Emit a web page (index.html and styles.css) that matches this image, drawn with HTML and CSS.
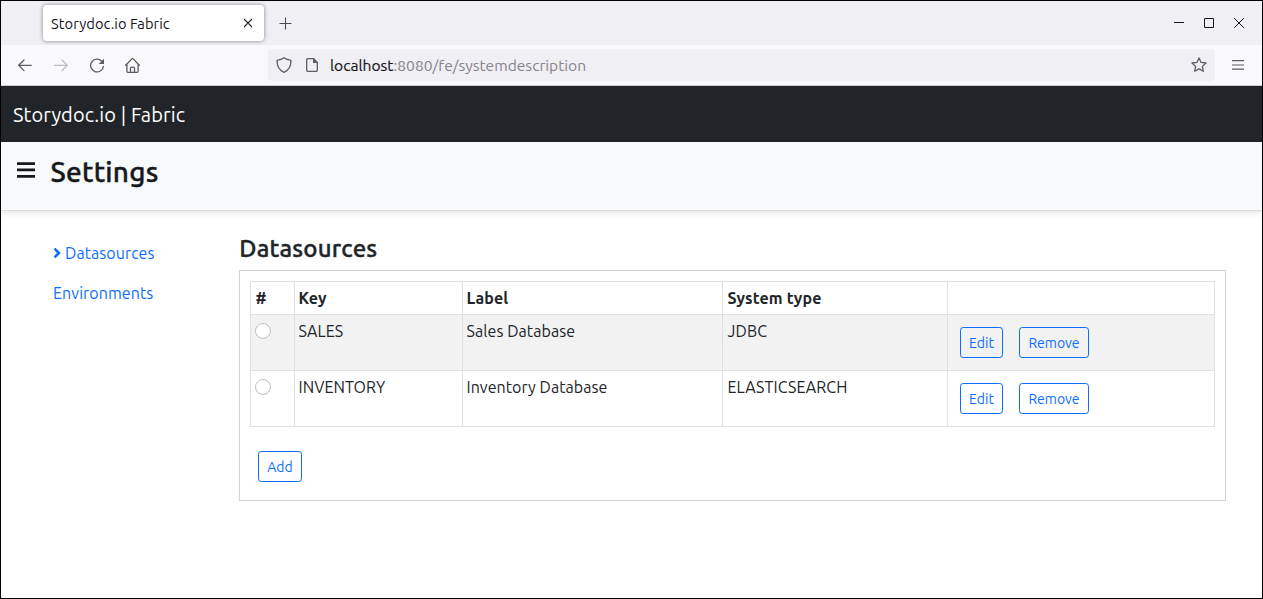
FILE: index.html
```html
<!DOCTYPE html>
<html lang="en">
<head>
<meta charset="utf-8">
<title>Storydoc.io Fabric</title>
<link rel="stylesheet" href="styles.css">
</head>
<body>
<div class="window">
  <div class="tabstrip">
    <div class="tab">
      <span class="tab-title">Storydoc.io Fabric</span>
      <svg class="tab-close" width="10" height="10" viewBox="0 0 10 10"><path d="M1 1l8 8M9 1l-8 8" fill="none" stroke="#2b2a33" stroke-width="1.1"/></svg>
    </div>
    <svg class="new-tab" width="13" height="13" viewBox="0 0 13 13"><path d="M6.5 .5v12M.5 6.5h12" fill="none" stroke="#4c4b55" stroke-width="1.1"/></svg>
    <div class="window-controls">
      <svg width="10" height="10" viewBox="0 0 10 10"><path d="M0 4.5h10" stroke="#15141a"/></svg>
      <svg width="10" height="10" viewBox="0 0 10 10"><path d="M.5 .5h9v9h-9z" fill="none" stroke="#15141a"/></svg>
      <svg width="10" height="10" viewBox="0 0 10 10"><path d="M.2 .2l9.6 9.6M9.8 .2l-9.6 9.6" fill="none" stroke="#15141a"/></svg>
    </div>
  </div>
  <div class="toolbar">
    <div class="nav-icons">
      <svg width="16" height="16" viewBox="0 0 16 16" fill="none" stroke="#5b5b66" stroke-width="1.3" stroke-linecap="round" stroke-linejoin="round"><path d="M7 3L1.700 8.300 7 13.600M2 8.300h12.300"/></svg>
      <svg width="16" height="16" viewBox="0 0 16 16" fill="none" stroke="#bcbcc2" stroke-width="1.3" stroke-linecap="round" stroke-linejoin="round"><path d="M9 3L14.300 8.300 9 13.600M14 8.300H1.700"/></svg>
      <svg width="16" height="16" viewBox="0 0 16 16"><path d="M12.600 4A6.400 6.400 0 1 0 14.400 9.300" fill="none" stroke="#5b5b66" stroke-width="1.3" stroke-linecap="round"/><path d="M15 1.700V6.500a.6.6 0 0 1-.6.6H9.700z" fill="#5b5b66"/></svg>
      <svg width="16" height="16" viewBox="0 0 16 16" fill="none" stroke="#5b5b66" stroke-width="1.3" stroke-linecap="round" stroke-linejoin="round"><path d="M.7 8.300L6.800 1.900a1 1 0 0 1 1.400 0L14.300 8.300M1.900 7.300v7a1 1 0 0 0 1 1h9.200a1 1 0 0 0 1-1V7.300M5.500 15.200v-4a1 1 0 0 1 1-1h2a1 1 0 0 1 1 1v4"/></svg>
    </div>
    <div class="urlbar">
      <svg class="shield" width="16" height="16" viewBox="0 0 16 16"><path d="M8 .8C6 2.200 3.800 2.900 1.700 3.100 1.300 3.200 1 3.500 1 4c.1 5.600 2.400 9.300 7 11.300 4.600-2 6.900-5.700 7-11.300 0-.5-.3-.8-.7-.9C12.200 2.900 10 2.200 8 .8z" fill="none" stroke="#5b5b66" stroke-width="1.3" stroke-linejoin="round"/></svg>
      <svg class="page" width="12" height="14" viewBox="0 0 12 14"><path d="M7.600 .7H1.900A1.200 1.200 0 0 0 .7 1.900v10.200a1.200 1.200 0 0 0 1.200 1.200h8.200a1.200 1.200 0 0 0 1.200-1.200V4.500z" fill="none" stroke="#5b5b66" stroke-width="1.3"/><path d="M7 .5h.8L11.700 4.400V5H7.600A.6.6 0 0 1 7 4.400z" fill="#5b5b66"/></svg>
      <span class="url"><span class="url-host">localhost</span><span class="url-path">:8080/fe/systemdescription</span></span>
      <svg class="star" width="16" height="16" viewBox="0 0 16 16"><path d="M8 .9l2.100 4.500 4.900.6-3.600 3.400.95 4.900L8 11.900l-4.350 2.400.95-4.900L1 6l4.900-.6z" fill="none" stroke="#5b5b66" stroke-width="1.3" stroke-linejoin="round"/></svg>
    </div>
    <svg class="menu" width="12" height="10" viewBox="0 0 12 10"><path d="M0 .6h12M0 5h12M0 9.200h12" stroke="#5b5b66" stroke-width="1.2"/></svg>
  </div>
  <div class="brandbar"><span class="brand">Storydoc.io | Fabric</span></div>
  <header class="pagehead">
    <svg width="18" height="16" viewBox="0 0 18 16"><path d="M0 1.600h18M0 7.900h18M0 14.300h18" stroke="#16181b" stroke-width="2.800"/></svg>
    <h1 class="title">Settings</h1>
  </header>
  <div class="content">
    <nav class="sidenav">
      <a class="navlink active"><svg width="8" height="12" viewBox="0 0 8 12"><path d="M1.500 1.600L5.900 6l-4.400 4.400" fill="none" stroke="#0d6efd" stroke-width="2.600"/></svg>Datasources</a>
      <a class="navlink">Environments</a>
    </nav>
    <main class="main">
      <h2 class="subtitle">Datasources</h2>
      <div class="panel">
        <table class="grid">
          <colgroup><col class="c1"><col class="c2"><col class="c3"><col class="c4"><col class="c5"></colgroup>
          <tr class="head"><th>#</th><th>Key</th><th>Label</th><th class="type">System type</th><th></th></tr>
          <tr class="row striped">
            <td><span class="radio"></span></td><td>SALES</td><td>Sales Database</td><td class="type">JDBC</td>
            <td><div class="actions"><span class="btn">Edit</span><span class="btn btn-remove">Remove</span></div></td>
          </tr>
          <tr class="row">
            <td><span class="radio"></span></td><td>INVENTORY</td><td>Inventory Database</td><td class="type">ELASTICSEARCH</td>
            <td><div class="actions"><span class="btn">Edit</span><span class="btn btn-remove">Remove</span></div></td>
          </tr>
        </table>
        <span class="btn btn-add">Add</span>
      </div>
    </main>
  </div>
</div>
</body>
</html>
```
FILE: styles.css
```css
* { box-sizing: border-box; }
body {
  margin: 0;
  font: 16px/24px Ubuntu, "Noto Sans", sans-serif;
  color: #212529;
  overflow: hidden;
}
svg { display: block; flex: none; }
.window {
  height: 599px;
  border: 1px solid #000;
  background: #fff;
  display: flex;
  flex-direction: column;
}
.tabstrip {
  height: 44px;
  flex: none;
  background: #f0eff4;
  display: flex;
  align-items: center;
  padding: 0 18px 0 42px;
}
.tab {
  width: 221px;
  height: 36px;
  background: #fff;
  border-radius: 4px;
  box-shadow: 0 0 4px rgba(0, 0, 0, .45);
  display: flex;
  align-items: center;
  justify-content: space-between;
  padding: 0 11px 0 8px;
}
.tab-title { font-size: 14.67px; letter-spacing: .08px; color: #15141a; padding-top: 1px; }
.new-tab { margin-left: 15px; margin-top: 1px; }
.window-controls { margin-left: auto; display: flex; gap: 20px; }
.toolbar {
  height: 41px;
  flex: none;
  background: #f9f9fb;
  border-bottom: 1px solid #cccccf;
  display: flex;
  align-items: center;
  padding: 0 18px 0 16px;
}
.nav-icons { display: flex; gap: 20px; }
.urlbar {
  width: 947px;
  height: 32px;
  margin-left: 127px;
  border-radius: 4px;
  background: #f0eff4;
  display: flex;
  align-items: center;
  padding: 0 8px;
}
.page { margin-left: 14px; }
.url { margin-left: 12px; font-size: 15.6px; white-space: nowrap; padding-bottom: 1px; }
.url-host { color: #15141a; -webkit-text-stroke: .15px #15141a; }
.url-path { color: #84848b; }
.star { margin-left: auto; }
.menu { margin-left: auto; }
.brandbar {
  height: 56px;
  flex: none;
  background: #212529;
  display: flex;
  align-items: center;
  padding: 1px 12px 0;
}
.brand { color: #fff; font-size: 20px; line-height: 30px; letter-spacing: .1px; }
.pagehead {
  height: 69px;
  flex: none;
  background: #f8f9fb;
  border-bottom: 1px solid #dcdddf;
  box-shadow: 0 2px 7px rgba(0, 0, 0, .11);
  display: flex;
  align-items: flex-start;
  padding: 13px 16px;
}
.pagehead svg { margin-top: 7px; }
.title, .subtitle { font-weight: 500; -webkit-text-stroke: .4px currentColor; }
.title { margin: 0 0 0 15.5px; font-size: 28px; line-height: 34px; letter-spacing: .24px; color: #16181b; }
.content { flex: 1; display: flex; }
.sidenav { width: 238px; padding: 30px 0 0 52px; display: flex; flex-direction: column; gap: 16px; }
.navlink { display: flex; align-items: center; color: #0d6efd; letter-spacing: .08px; }
.navlink svg { margin-right: 4px; }
.main { width: 987px; padding-top: 23px; }
.subtitle { margin: 0 0 7px .3px; font-size: 24px; line-height: 29px; letter-spacing: .2px; }
.panel { height: 231px; border: 1px solid #ced4da; padding: 10px; }
.grid { width: 965px; table-layout: fixed; border-collapse: collapse; }
.c1 { width: 44px; }
.c2 { width: 168px; }
.c3 { width: 260px; }
.c4 { width: 225px; }
.c5 { width: 267px; }
.grid th, .grid td {
  border: 1px solid #dee2e6;
  padding: 4px 4px 4px 3.5px;
  text-align: left;
  vertical-align: top;
  letter-spacing: .07px;
}
.grid th { font-weight: 700; }
.grid th.type, .grid td.type { padding-left: 4.5px; letter-spacing: .12px; }
.head { height: 33px; }
.row { height: 56px; }
.grid th:first-child { padding-left: 4.5px; }
.grid td:first-child { padding-left: 4px; }
.grid td:last-child { padding: 12px; letter-spacing: 0; }
.striped { background: #f2f2f2; }
.radio {
  display: block;
  width: 16px;
  height: 16px;
  margin-top: 4px;
  border: 1px solid #bfbfbf;
  border-radius: 50%;
  background: #fff;
}
.actions { display: flex; gap: 16px; }
.btn {
  width: 43px;
  height: 31px;
  border: 1px solid #0d6efd;
  border-radius: 3.2px;
  color: #0d6efd;
  font-size: 14px;
  display: flex;
  align-items: center;
  justify-content: center;
}
.btn-remove { width: 70px; }
.btn-add { width: 44px; margin: 24px 0 0 8px; }
```
